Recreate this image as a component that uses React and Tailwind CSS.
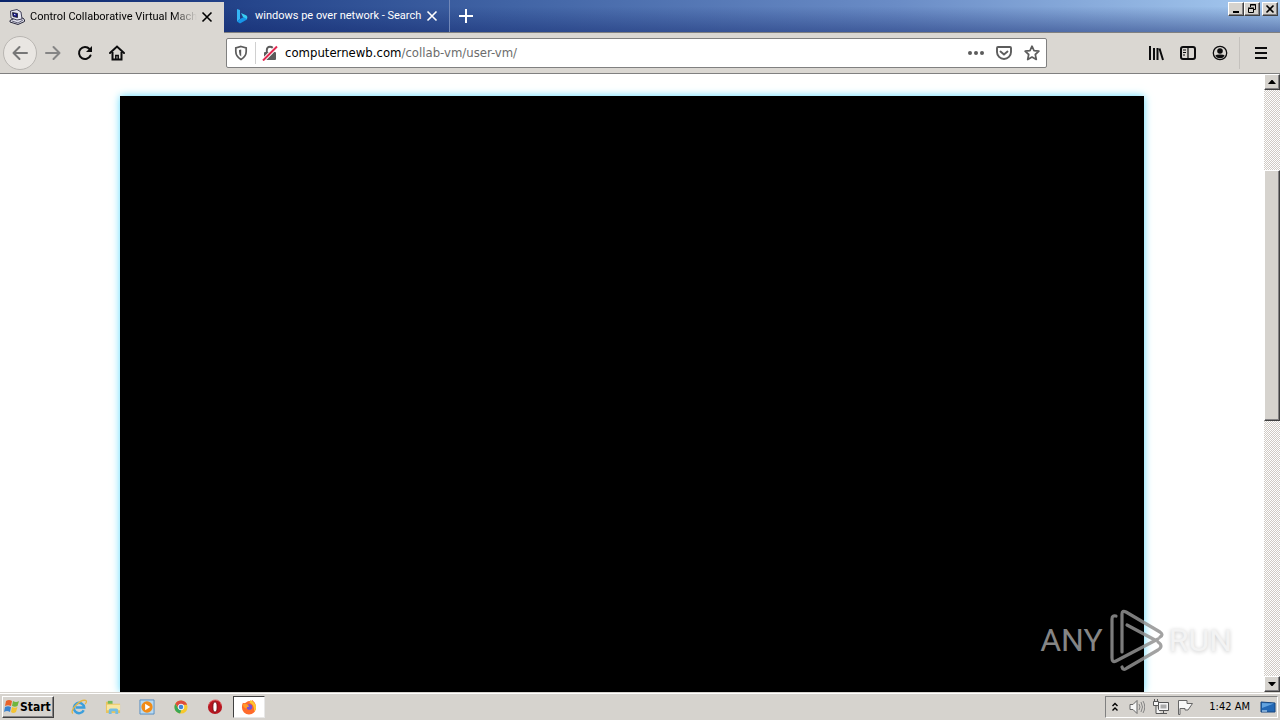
import React from "react";

const raised =
  "border border-t-white border-l-white border-r-[#404040] border-b-[#404040] bg-[#d6d3ce] shadow-[inset_-1px_-1px_0_#848284]";

function CloseIcon() {
  return (
    <svg viewBox="0 0 12 12" className="size-3" fill="none" stroke="currentColor" strokeWidth="1.6">
      <path d="M1.500 1.500 10.500 10.500M10.500 1.500 1.500 10.500" />
    </svg>
  );
}

function ComputerIcon() {
  return (
    <svg viewBox="0 0 16 16" className="size-4 shrink-0">
      <path d="m1 11.500 4-2 9-.5 1.500 2v1.500L9 15.500 1 13z" fill="#dedeea" stroke="#26263a" />
      <path d="m3 12 6 2 5-3" fill="none" stroke="#66667c" />
      <path d="M1.500 2 8 .5 12 3l1 7-5 1-6-2z" fill="#e4e4f0" stroke="#44445a" />
      <path d="M3.500 3.500 8.500 4.500v4L4 7.500z" fill="#111184" stroke="#222" strokeWidth=".8" />
      <path d="m5 4.800 1.500.4v1.200L5 6z" fill="#cdd6ff" />
    </svg>
  );
}

function BingIcon() {
  return (
    <svg viewBox="0 0 16 16" className="size-4 shrink-0">
      <path d="m3 1 3 1v9l-3 2.500z" fill="#35b5f5" />
      <path d="m3 13.500 3-2.500 4-2 3 1v1.500L6 15.500z" fill="#1695e8" />
      <path d="m7 5 5.500 2.500q1.500 1 .5 3.500L9 9z" fill="#39cdf2" />
    </svg>
  );
}

function Tab({ active, title, icon }) {
  return (
    <div
      className={
        active
          ? "mt-[2px] flex h-[31px] w-56 items-center bg-[#dad7d2] pb-[2px] pl-[9px] pr-[11px] text-black"
          : "flex h-8 w-[226px] items-center border-r border-[#7187b8] pl-[10px] pr-[11px] text-white"
      }
    >
      {icon}
      <span
        className={
          active
            ? "ml-[5px] min-w-0 flex-1 whitespace-nowrap [mask-image:linear-gradient(to_right,black_85%,transparent)]"
            : "ml-[5px] min-w-0 flex-1 whitespace-nowrap"
        }
      >
        {title}
      </span>
      <button aria-label="Close tab" className="ml-1 grid size-3 shrink-0 place-items-center">
        <CloseIcon />
      </button>
    </div>
  );
}

function ToolButton({ label, children }) {
  return (
    <button aria-label={label} className="grid size-8 shrink-0 place-items-center">
      <svg viewBox="0 0 16 16" className="size-4" fill="none" stroke="currentColor" strokeWidth="2">
        {children}
      </svg>
    </button>
  );
}

function TitleBar() {
  return (
    <header className="flex h-[33px] shrink-0 border-b border-[#808080] bg-[linear-gradient(to_bottom,transparent_20%,rgba(15,35,105,0.45)),linear-gradient(to_right,#0a246a,#26468c_20%,#4164a5_40%,#6a8cc6_70%,#a6caf0)] font-['Roboto',sans-serif]">
      <Tab active title="Control Collaborative Virtual Machi" icon={<ComputerIcon />} />
      <Tab title="windows pe over network - Search" icon={<BingIcon />} />
      <button aria-label="New tab" className="grid w-8 place-items-center text-white">
        <svg viewBox="0 0 14 14" className="size-[14px]" stroke="currentColor" strokeWidth="2">
          <path d="M7 0v14M0 7h14" />
        </svg>
      </button>
      <div className="ml-auto mr-[2px] mt-[2px] flex h-[14px] text-black">
        <button aria-label="Minimize" className={`grid w-4 place-items-center ${raised}`}>
          <svg viewBox="0 0 10 10" className="size-[10px]"><path d="M2 7h6v2H2z" /></svg>
        </button>
        <button aria-label="Restore" className={`grid w-4 place-items-center ${raised}`}>
          <svg viewBox="0 0 10 10" className="size-[10px]" fill="none" stroke="currentColor">
            <path d="M3.500 3V.5h5v5H7M3 1h6M1.500 4.500h5v4h-5zM1 4h6" />
          </svg>
        </button>
        <button aria-label="Close window" className={`ml-[2px] grid w-4 place-items-center ${raised}`}>
          <svg viewBox="0 0 10 10" className="size-[10px]" stroke="currentColor" strokeWidth="1.6">
            <path d="m1.500 1.500 7 7m0-7-7 7" />
          </svg>
        </button>
      </div>
    </header>
  );
}

function AddressBar() {
  return (
    <div className="flex h-[30px] min-w-0 flex-1 items-center rounded-[2px] border border-[#808080] bg-white px-[6px] text-[#5c5c5c]">
      <button aria-label="Tracking protection" className="grid size-4 place-items-center">
        <svg viewBox="0 0 16 16" className="size-4" fill="none" stroke="currentColor" strokeWidth="1.7">
          <path d="M8 1.500 13.200 3v3.500q0 5-5.200 8-5.200-3-5.200-8V3z" />
          <path d="M8.200 4.500v7q-2.200-1.500-2.200-5V5z" fill="currentColor" stroke="none" />
        </svg>
      </button>
      <span className="mx-[6px] h-[22px] w-px bg-[#d0d0d0]" />
      <button aria-label="Connection not secure" className="grid size-4 place-items-center">
        <svg viewBox="0 0 16 16" className="size-4">
          <path d="M4.800 8V5q0-3.200 3.200-3.200T11.200 5v3" fill="none" stroke="currentColor" strokeWidth="1.900" />
          <rect x="2" y="7" width="12" height="8" rx="1" fill="currentColor" />
          <path d="m1 15.500 14-14" stroke="#fff" strokeWidth="4" />
          <path d="m1 15.500 14-14" stroke="#e22850" strokeWidth="2" />
        </svg>
      </button>
      <a href="#address" className="ml-[7px] flex-1 truncate text-[13px] leading-5 text-[#6c6c6c]">
        <span className="text-black">computernewb.com</span>/collab-vm/user-vm/
      </a>
      <div className="flex gap-3">
        <button aria-label="Page actions">
          <svg viewBox="0 0 16 16" className="size-4" fill="currentColor">
            <circle cx="2" cy="8" r="2" /><circle cx="8" cy="8" r="2" /><circle cx="14" cy="8" r="2" />
          </svg>
        </button>
        <button aria-label="Save to Pocket">
          <svg viewBox="0 0 16 16" className="size-4" fill="none" stroke="currentColor" strokeWidth="1.900">
            <path d="M2 2h12q1 0 1 1v4a7 7 0 0 1-14 0V3q0-1 1-1Z" />
            <path d="m4.500 6.500 3.500 3 3.500-3" strokeLinecap="round" />
          </svg>
        </button>
        <button aria-label="Bookmark this page">
          <svg viewBox="0 0 16 16" className="size-4" fill="none" stroke="currentColor" strokeWidth="1.700" strokeLinejoin="round">
            <path d="m8 1.200 2 4.500 4.900.500-3.600 3.300 1 5L8 12l-4.300 2.500 1-5L1.100 6.200 6 5.700z" />
          </svg>
        </button>
      </div>
    </div>
  );
}

function Toolbar() {
  return (
    <nav className="flex h-[41px] shrink-0 items-center border-b border-[#808080] bg-[#dad7d2] px-[3px] text-[#0c0c0d]">
      <button aria-label="Back" className="grid size-[34px] shrink-0 place-items-center rounded-full border border-[#b9b6b2] bg-[#e9e6e2] text-[#777]">
        <svg viewBox="0 0 16 16" className="size-4" fill="none" stroke="currentColor" strokeWidth="2" strokeLinecap="round" strokeLinejoin="round">
          <path d="M15 8H1.500M7.500 2l-6 6 6 6" />
        </svg>
      </button>
      <span className="text-[#858585]">
        <ToolButton label="Forward"><path d="M1 8h13.500M8.500 2l6 6-6 6" strokeLinecap="round" strokeLinejoin="round" /></ToolButton>
      </span>
      <ToolButton label="Reload">
        <path d="M13.500 10.500A6 6 0 1 1 12.500 4" strokeLinecap="round" />
        <path d="M15 1v6H9z" fill="currentColor" stroke="none" />
      </ToolButton>
      <ToolButton label="Home">
        <path d="m1 8 7-6.500L15 8" strokeLinecap="round" />
        <path d="M3.500 7v7.500h9V7" />
        <path d="M6.800 15v-4.500h2.400V15" strokeWidth="1.500" />
      </ToolButton>
      <span className="w-[93px] shrink" />
      <AddressBar />
      <span className="w-[93px] shrink" />
      <ToolButton label="Library">
        <path d="M2 1v14M6 3v12M9.500 3v12M11.500 3.500 15 15" />
      </ToolButton>
      <ToolButton label="Sidebars">
        <rect x="1" y="2" width="14" height="12" rx="2" />
        <path d="M8 2v12M3 5h3M3 7.500h3M3 10h2" strokeWidth="1.200" />
      </ToolButton>
      <ToolButton label="Account">
        <circle cx="8" cy="8" r="6.700" strokeWidth="1.300" />
        <circle cx="8" cy="6" r="2.800" fill="currentColor" stroke="none" />
        <path d="M3.300 10.800Q4 9.500 8 9.500t4.700 1.300Q11 13.300 8 13.300t-4.700-2.500Z" fill="currentColor" stroke="none" />
      </ToolButton>
      <span className="ml-[3px] mr-[5px] h-8 w-px bg-[#c4c1bd]" />
      <ToolButton label="Menu"><path d="M2 3h12M2 8h12M2 13h12" /></ToolButton>
    </nav>
  );
}

const dither = "bg-[repeating-conic-gradient(#d0cac4_0_25%,#ffffff_0_50%)] bg-[length:2px_2px]";

function ScrollBar() {
  return (
    <div className={`flex w-4 shrink-0 flex-col ${dither}`}>
      <button aria-label="Scroll up" className={`grid h-4 place-items-center ${raised}`}>
        <svg viewBox="0 0 8 4" className="h-1 w-2"><path d="M0 4 3.500 0h1L8 4z" /></svg>
      </button>
      <div className="grow-[80]" />
      <div className={`grow-[250] ${raised}`} />
      <div className="grow-[256]" />
      <button aria-label="Scroll down" className={`grid h-4 place-items-center ${raised}`}>
        <svg viewBox="0 0 8 4" className="h-1 w-2"><path d="M0 0h8L4.500 4h-1z" /></svg>
      </button>
    </div>
  );
}

function Watermark() {
  return (
    <div className="absolute bottom-5 right-12 flex h-[64px] items-center font-['Roboto',sans-serif] text-[32px] leading-none">
      <span className="text-[#858585]">ANY</span>
      <svg viewBox="0 0 56 64" className="mx-[5px] h-16 w-14" fill="none" stroke="#929292" strokeWidth="3.200" strokeLinejoin="round" strokeLinecap="round">
        <path d="M8 8q-4-1-4 3v39q0 5 4 3L50 31M14 44V6q0-4 4-2l34 20q4 3 0 5M19 17l28 15M14 59q1 4 5 1l31-18q6-4 0-8" strokeOpacity=".85" />
      </svg>
      <span className="text-[#f3f3f3] [text-shadow:0_1px_4px_#c8c8c8]">RUN</span>
    </div>
  );
}

function StartLogo() {
  return (
    <svg viewBox="0 0 16 16" className="size-4">
      <path d="M2 2q3-2 6 0L7 7Q4 5.500 1 7z" fill="#e9622a" />
      <path d="M9 2q3 2 6 0l-1.500 5Q11 8.500 8 7z" fill="#70b63e" />
      <path d="M1 8q3-1.500 6 0l-1 5q-3-2-6 0z" fill="#3b83cf" />
      <path d="M8 8q3 1.500 5.500 0L12 13q-3 2-5 0z" fill="#f4c332" />
    </svg>
  );
}

const launchers = [
  {
    name: "Internet Explorer",
    art: (
      <>
        <path d="M13.500 12A5.500 5.500 0 1 1 14 9H5" fill="none" stroke="#3c9fdc" strokeWidth="2.600" />
        <path d="M2 15.500C-2 12 10 0 15.500 1.500q2 1-.5 4" fill="none" stroke="#e5b644" strokeWidth="1.400" />
      </>
    ),
  },
  {
    name: "Windows Explorer",
    art: (
      <>
        <path d="M1 3h6l1 2h8v10H1z" fill="#e9c45c" />
        <path d="M3 2h5v3H3z" fill="#73b95a" />
        <path d="M2 6h14v6H2z" fill="#f8e6a0" />
        <path d="M4 16v-4q0-2 2-2h6q2 0 2 2v4h-3v-3H7v3z" fill="#73bde3" />
      </>
    ),
  },
  {
    name: "Media Player",
    art: (
      <>
        <path d="M1 1h15v15H1z" fill="#b7d9f2" stroke="#568dc0" />
        <circle cx="8.500" cy="8.500" r="6" fill="#f18b17" />
        <path d="m6.500 5 5.500 3.500L6.500 12z" fill="#fff" />
      </>
    ),
  },
  {
    name: "Chrome",
    art: (
      <>
        <circle cx="8.500" cy="8.500" r="7" fill="#f7c92d" />
        <path d="M2.500 5A7 7 0 0 1 15 6H8.500L6 10z" fill="#dd4b3e" />
        <path d="M2.500 5 6 10.500l3 1-1.500 4A7 7 0 0 1 2.500 5" fill="#3aa757" />
        <circle cx="8.500" cy="8.500" r="3" fill="#4285d6" stroke="#fff" />
      </>
    ),
  },
  {
    name: "Opera",
    art: (
      <>
        <circle cx="8.500" cy="8.500" r="7.500" fill="#b81620" />
        <path d="M2 6q2-5 7-5t6 5" fill="none" stroke="#e76868" />
        <ellipse cx="8.500" cy="8.500" rx="2.300" ry="5.500" fill="#fff" stroke="#6e080e" />
      </>
    ),
  },
  {
    name: "Firefox",
    active: true,
    art: (
      <>
        <path d="M2 4q1 1 3 0 3-3 6-1l1-2q4 3 4 8a7.500 7.500 0 0 1-15 0q0-3 1-5" fill="#ff6b2b" />
        <path d="M10 1q6 3 6 8 0 3-2 4 0-8-5-9z" fill="#ffc72d" />
        <circle cx="9" cy="8.500" r="3" fill="#7650d7" />
        <path d="M2 6q2-2 5 0L9 8q-3 0-3 2Q3 10 2 6" fill="#ff9c28" />
      </>
    ),
  },
];

function TaskBar() {
  return (
    <footer className="flex h-7 shrink-0 items-center border-t border-[#d6d3ce] bg-[#d6d3ce] px-[2px] shadow-[inset_0_1px_0_white]">
      <button className={`flex h-[22px] w-[52px] items-center pl-px ${raised}`}>
        <StartLogo />
        <span className="text-[12px] font-bold leading-4">Start</span>
      </button>
      <div className="ml-[9px] flex gap-[2px]">
        {launchers.map((item) => (
          <button
            key={item.name}
            aria-label={item.name}
            className={
              item.active
                ? "grid h-[22px] w-8 place-items-center border border-t-[#404040] border-l-[#404040] border-r-[#e8e8e8] border-b-[#e8e8e8] bg-white"
                : "grid h-[22px] w-8 place-items-center"
            }
          >
            <svg viewBox="0 0 17 17" className="size-4">{item.art}</svg>
          </button>
        ))}
      </div>
      <div className="ml-auto flex h-[22px] items-center border border-t-[#808080] border-l-[#808080] border-r-white border-b-white pl-[5px] pr-px">
        <button aria-label="Show hidden icons">
          <svg viewBox="0 0 8 10" className="h-[10px] w-2" fill="none" stroke="black" strokeWidth="1.400">
            <path d="m1.500 4 2.500-2.500L6.500 4m-5 4.500L4 6l2.500 2.500" />
          </svg>
        </button>
        <div className="ml-[10px] flex gap-2">
          <button aria-label="Volume">
            <svg viewBox="0 0 16 16" className="size-4" fill="none" stroke="#858585">
              <path d="M1 5.500h3l4-4v13l-4-4H1z" fill="#f6f6f6" stroke="#666" />
              <path d="M10 5q2 3 0 6m2-8q3 5 0 10m2-11q3.500 6 0 12" />
            </svg>
          </button>
          <button aria-label="Network">
            <svg viewBox="0 0 16 16" className="size-4" fill="#f5f5f5" stroke="#555">
              <path d="M5.500 3.500h10v8h-10zM8 14.500h6M10.500 12v2" />
              <path d="M7.500 5.500h6v4h-6z" fill="#aaa" stroke="none" />
              <path d="M.5 2.500h5v4h-5zM1.500 0v2m3-2v2M3 7v7.500h5" />
            </svg>
          </button>
          <button aria-label="Action Center">
            <svg viewBox="0 0 16 16" className="size-4" fill="#f8f8f8" stroke="#666">
              <path d="M1.500 1.500v14H3V9.500h5v1.500h3l4.500-6.500H10v-3z" />
            </svg>
          </button>
        </div>
        <time className="ml-4 whitespace-nowrap">1:42 AM</time>
        <button aria-label="Show desktop" className="ml-[10px]">
          <svg viewBox="0 0 16 16" className="size-4">
            <path d="m1 3 14 1v9H1z" fill="#2368b5" stroke="#16467f" />
            <path d="m2 4 12 .5L2 9z" fill="#62a3df" />
            <path d="M2 12h5" stroke="#d9f0ff" />
          </svg>
        </button>
      </div>
    </footer>
  );
}

export default function App() {
  return (
    <div className="flex h-screen flex-col overflow-hidden bg-white font-['DejaVu_Sans_Condensed','Noto_Sans',sans-serif] text-[11px] leading-4 text-black">
      <TitleBar />
      <Toolbar />
      <div className="relative flex min-h-0 flex-1">
        <main className="flex min-w-0 flex-1 overflow-hidden pt-[22px]">
          <div role="img" aria-label="Virtual machine display" className="mx-auto w-full max-w-[1024px] bg-black shadow-[0_0_8px_#5fdcff]" />
        </main>
        <ScrollBar />
        <Watermark />
      </div>
      <TaskBar />
    </div>
  );
}
